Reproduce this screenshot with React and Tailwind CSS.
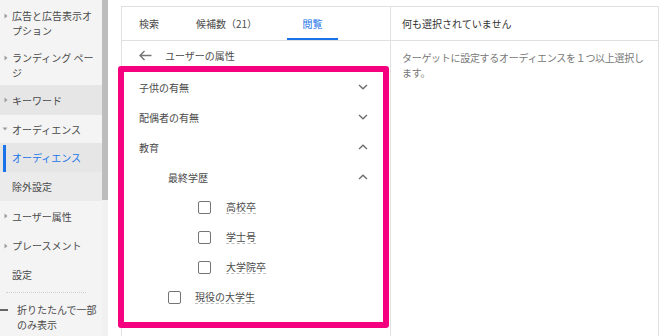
import React from "react";

const Tri = ({ down }) => (
  <svg width="6" height="6" viewBox="0 0 6 6" className="shrink-0">
    {down ? <path d="M0.5 1.5 L5.5 1.5 L3 4.5 Z" fill="#9e9e9e" /> : <path d="M1.5 0.5 L4.5 3 L1.5 5.5 Z" fill="#9e9e9e" />}
  </svg>
);

const Chev = ({ up }) => (
  <svg width="10" height="6" viewBox="0 0 10 6" className="shrink-0">
    <path d={up ? "M1 5 L5 1.2 L9 5" : "M1 1 L5 4.8 L9 1"} fill="none" stroke="#6b6b6b" strokeWidth="1.3" />
  </svg>
);

const Box = () => <div className="w-[13px] h-[13px] border-[1.5px] border-[#757575] rounded-[2px] shrink-0" />;

export default function App() {
  return (
    <div
      className="w-[666px] h-[336px] flex bg-white overflow-hidden text-[10px] text-[#4a4a4a]"
      style={{ fontFamily: '"Noto Sans CJK JP", "Noto Sans", sans-serif' }}
    >
      {/* Sidebar */}
      <div className="w-[102px] shrink-0 bg-[#f4f4f4] flex flex-col leading-[15px]">
        <div className="flex pt-[8px] h-[44px]">
          <div className="w-[12px] pl-[3px] pt-[5px]"><Tri /></div>
          <div className="w-[84px]">広告と広告表示オプション</div>
        </div>
        <div className="flex pt-[6px] h-[41px]">
          <div className="w-[12px] pl-[3px] pt-[5px]"><Tri /></div>
          <div className="w-[84px]">ランディング ページ</div>
        </div>
        <div className="flex items-center h-[30px] bg-[#e6e6e6]">
          <div className="w-[12px] pl-[3px] flex"><Tri /></div>
          <div>キーワード</div>
        </div>
        <div className="flex items-center h-[28px]">
          <div className="w-[12px] pl-[2px] flex"><Tri down /></div>
          <div>オーディエンス</div>
        </div>
        <div className="flex items-center h-[29px] bg-[#e6e6e6] relative">
          <div className="absolute left-[3px] top-[2px] bottom-0 w-[3px] bg-[#1a73e8]" />
          <div className="pl-[12px] text-[#1a73e8]">オーディエンス</div>
        </div>
        <div className="flex items-center h-[29px] bg-[#ebebeb]">
          <div className="pl-[12px]">除外設定</div>
        </div>
        <div className="flex items-center h-[30px]">
          <div className="w-[12px] pl-[3px] flex"><Tri /></div>
          <div>ユーザー属性</div>
        </div>
        <div className="flex items-center h-[29px]">
          <div className="w-[12px] pl-[3px] flex"><Tri /></div>
          <div>プレースメント</div>
        </div>
        <div className="flex items-center h-[29px]">
          <div className="pl-[12px]">設定</div>
        </div>
        <div className="mx-[6px] mt-[3px] border-t border-dotted border-[#cfcfcf] w-[80px]" />
        <div className="flex pt-[9px]">
          <div className="w-[17px] pt-[7px]"><div className="w-[8px] h-[1.5px] bg-[#666]" /></div>
          <div className="w-[80px]">折りたたんで一部のみ表示</div>
        </div>
      </div>

      {/* Scrollbar */}
      <div className="w-[6px] shrink-0 bg-[#f1f1f1] flex flex-col">
        <div className="h-[200px] bg-[#bdbdbd]" />
      </div>

      <div className="w-[13px] shrink-0" />

      {/* Main */}
      <div className="flex pt-[6px] h-full">
        {/* Left card */}
        <div className="w-[269px] border-l border-t border-[#e0e0e0] flex flex-col">
          <div className="h-[34px] border-b border-[#e0e0e0] flex items-stretch pl-[17px]">
            <div className="flex items-center w-[57px] shrink-0">検索</div>
            <div className="flex items-center w-[91px] shrink-0">候補数（21）</div>
            <div className="relative flex items-center justify-center w-[51px] shrink-0 text-[#1a73e8]">
              閲覧
              <div className="absolute left-0 right-0 bottom-0 h-[2px] bg-[#1a73e8]" />
            </div>
          </div>
          <div className="h-[25px] flex items-center pl-[17px] pt-[4px]">
            <svg width="13" height="11" viewBox="0 0 13 11" className="shrink-0">
              <path d="M12.5 5.5 H1.5 M5.5 1 L1 5.5 L5.5 10" fill="none" stroke="#757575" strokeWidth="1.4" />
            </svg>
            <span className="ml-[13px]">ユーザーの属性</span>
          </div>
          <div className="-ml-[4px] w-[271px] h-[262px] border-[6px] border-[#f5007f] rounded-[3px] bg-white flex flex-col">
            <div className="h-[30px] flex items-center justify-between pl-[15px] pr-[15px]">
              <span>子供の有無</span><Chev />
            </div>
            <div className="h-[30px] flex items-center justify-between pl-[15px] pr-[15px]">
              <span>配偶者の有無</span><Chev />
            </div>
            <div className="h-[30px] flex items-center justify-between pl-[15px] pr-[15px]">
              <span>教育</span><Chev up />
            </div>
            <div className="h-[30px] flex items-center justify-between pl-[44px] pr-[15px]">
              <span>最終学歴</span><Chev up />
            </div>
            {["高校卒", "学士号", "大学院卒"].map((t) => (
              <div key={t} className="h-[30px] flex items-center pl-[74px]">
                <Box />
                <span className="ml-[15px] border-b border-dashed border-[#bdbdbd] leading-[13px]">{t}</span>
              </div>
            ))}
            <div className="h-[30px] flex items-center pl-[44px]">
              <Box />
              <span className="ml-[14px] border-b border-dashed border-[#bdbdbd] leading-[13px]">現役の大学生</span>
            </div>
          </div>
        </div>

        {/* Right card */}
        <div className="w-[269px] border-l border-r border-t border-[#e0e0e0] flex flex-col">
          <div className="h-[34px] border-b border-[#e0e0e0] flex items-center pl-[11px] text-[#333]">
            何も選択されていません
          </div>
          <div className="pl-[11px] pr-[8px] pt-[9px] leading-[15px] text-[#777] tracking-[-0.3px]">
            ターゲットに設定するオーディエンスを１つ以上選択します。
          </div>
        </div>
      </div>
    </div>
  );
}
